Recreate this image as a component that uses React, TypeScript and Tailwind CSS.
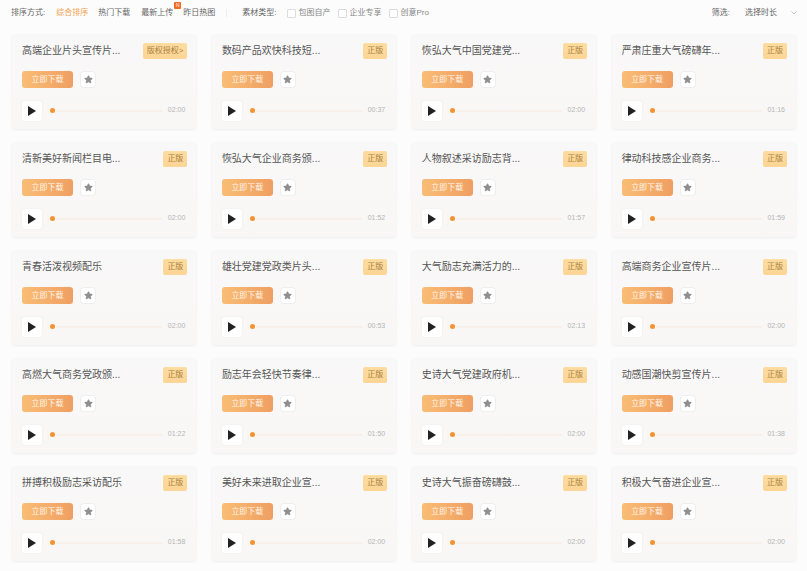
import { Star } from 'lucide-react';

const tracks: { title: string; time: string; badge?: string }[] = [
  { title: '高端企业片头宣传片...', time: '02:00', badge: '版权授权>' },
  { title: '数码产品欢快科技短...', time: '00:37' },
  { title: '恢弘大气中国党建党...', time: '02:00' },
  { title: '严肃庄重大气磅礴年...', time: '01:16' },
  { title: '清新美好新闻栏目电...', time: '02:00' },
  { title: '恢弘大气企业商务颁...', time: '01:52' },
  { title: '人物叙述采访励志背...', time: '01:57' },
  { title: '律动科技感企业商务...', time: '01:59' },
  { title: '青春活泼视频配乐', time: '02:00' },
  { title: '雄壮党建党政类片头...', time: '00:53' },
  { title: '大气励志充满活力的...', time: '02:13' },
  { title: '高端商务企业宣传片...', time: '02:00' },
  { title: '高燃大气商务党政颁...', time: '01:22' },
  { title: '励志年会轻快节奏律...', time: '01:50' },
  { title: '史诗大气党建政府机...', time: '02:00' },
  { title: '动感国潮快剪宣传片...', time: '01:38' },
  { title: '拼搏积极励志采访配乐', time: '01:58' },
  { title: '美好未来进取企业宣...', time: '02:00' },
  { title: '史诗大气振奋磅礴鼓...', time: '02:00' },
  { title: '积极大气奋进企业宣...', time: '02:00' },
];

const Check = ({ label }: { label: string }) => (
  <label className="flex items-center gap-[2px]">
    <span className="w-[9px] h-[9px] bg-white border border-[#dcdcdc] rounded-[1px]" />
    <span>{label}</span>
  </label>
);

const Card = ({ title, time, badge }: { title: string; time: string; badge?: string }) => (
  <div className="h-[95px] rounded-[4px] bg-gradient-to-b from-[#f9f8f8] to-[#f9f7f6] shadow-[0_1px_3px_rgba(0,0,0,0.07)] pl-[10px] pr-[9px] pt-[9px] flex flex-col">
    <div className="flex items-start justify-between h-[16px]">
      <span className="text-[10px] leading-[24px] -mt-[4px] text-[#555] whitespace-nowrap">{title}</span>
      <span className="h-[16px] rounded-[2px] bg-gradient-to-b from-[#fddca0] to-[#fdd594] px-[4px] text-[8px] leading-[16px] text-[#a9803f] whitespace-nowrap">
        {badge ?? '正版'}
      </span>
    </div>
    <div className="flex items-center gap-[7px] mt-[12px]">
      <button className="w-[51px] h-[17px] rounded-[3px] bg-gradient-to-r from-[#f9bd75] to-[#ef9f62] text-[8px] leading-[17px] text-[#fff5e9]">
        立即下载
      </button>
      <span className="w-[16px] h-[17px] rounded-[4px] bg-white border border-[#eeeeee] flex items-center justify-center">
        <Star size={9} className="text-[#8f8f8f] fill-[#8f8f8f]" />
      </span>
    </div>
    <div className="flex items-center mt-[13px]">
      <span className="w-[20px] h-[20px] rounded-[4px] bg-white shadow-[0_0_3px_rgba(0,0,0,0.05)] flex items-center justify-center shrink-0">
        <svg width="8" height="10" viewBox="0 0 8 10"><path d="M0 0 L8 5 L0 10 Z" fill="#222" /></svg>
      </span>
      <span className="w-[5px] h-[5px] rounded-full bg-[#f59331] ml-[8px] -mt-[1px] shrink-0" />
      <span className="h-[2px] w-[106px] bg-[#f7efe9] ml-[1px] -mt-[1px] shrink-0" />
      <span className="ml-auto text-[7px] text-[#b5b5b5] -mt-[1px] pr-[2px]">{time}</span>
    </div>
  </div>
);

export default function App() {
  return (
    <div
      className="w-[807px] h-[571px] overflow-hidden bg-[#fcfcfd]"
      style={{ fontFamily: '"Liberation Sans", "Noto Sans CJK SC", sans-serif' }}
    >
      <div className="h-[26px] pl-[11px] pr-[10px] flex items-center text-[8px] text-[#666] whitespace-nowrap">
        <span>排序方式:</span>
        <span className="ml-[11px] text-[#f5a24b]">综合排序</span>
        <span className="ml-[10px]">热门下载</span>
        <span className="ml-[11px] relative">
          最新上传
          <span className="absolute -top-[5px] -right-[8px] w-[7px] h-[7px] bg-[#f26a21] text-white text-[5px] leading-[7px] text-center rounded-[1px]">N</span>
        </span>
        <span className="ml-[10px]">昨日热图</span>
        <span className="ml-[11px] w-px h-[8px] bg-[#eeeeee]" />
        <span className="ml-[15px]">素材类型:</span>
        <div className="ml-[11px] flex items-center gap-[8px] text-[#888]">
          <Check label="包图自产" />
          <Check label="企业专享" />
          <Check label="创意Pro" />
        </div>
        <span className="ml-auto">筛选:</span>
        <span className="ml-[15px]">选择时长</span>
        <svg className="ml-[14px]" width="6" height="4" viewBox="0 0 6 4" fill="none"><path d="M0.5 0.5 L3 3 L5.5 0.5" stroke="#aaa" strokeWidth="0.7" /></svg>
      </div>
      <div className="grid grid-cols-4 gap-x-[15.5px] gap-y-[13px] pl-[12px] pr-[11px] pt-[8px]">
        {tracks.map((t) => (
          <Card key={t.title} {...t} />
        ))}
      </div>
    </div>
  );
}
